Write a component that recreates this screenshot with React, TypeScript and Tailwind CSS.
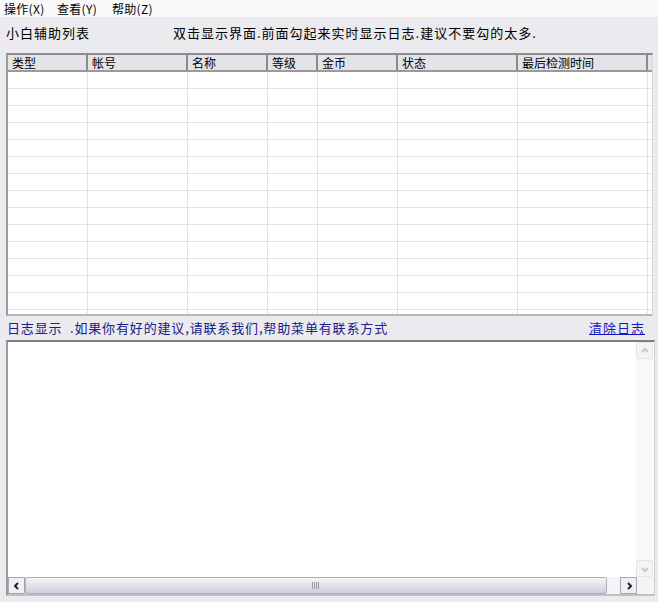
import React from "react";

const cols = [
  { name: "类型", w: 80 },
  { name: "帐号", w: 100 },
  { name: "名称", w: 80 },
  { name: "等级", w: 50 },
  { name: "金币", w: 80 },
  { name: "状态", w: 120 },
  { name: "最后检测时间", w: 130 },
];

const font = { fontFamily: '"Noto Sans CJK SC", "Noto Sans", sans-serif' };

function Chevron({ dir, color = "#222" }: { dir: "left" | "right" | "up" | "down"; color?: string }) {
  const d =
    dir === "left"
      ? "M6 2 L3 5 L6 8"
      : dir === "right"
      ? "M4 2 L7 5 L4 8"
      : dir === "up"
      ? "M2 6 L5 3 L8 6"
      : "M2 4 L5 7 L8 4";
  return (
    <svg width="10" height="10" viewBox="0 0 10 10">
      <path d={d} fill="none" stroke={color} strokeWidth="2" />
    </svg>
  );
}

export default function App() {
  const rows = Array.from({ length: 15 });
  return (
    <div className="w-[658px] h-[602px] bg-[#ebeaee] text-black overflow-hidden flex flex-col" style={font}>
      {/* menu */}
      <div className="h-[17px] bg-[#f9f9fa] flex items-center text-[12px] leading-none">
        <span className="ml-[4px] w-[53px] tracking-[0.3px]">操作(X)</span>
        <span className="w-[55px] tracking-[0.3px]">查看(Y)</span>
        <span className="tracking-[0.3px]">帮助(Z)</span>
      </div>
      {/* label row */}
      <div className="h-[36px] flex items-start pt-[8px] text-[13px] tracking-[1px] leading-[16px]">
        <span className="ml-[6px] w-[167px]">小白辅助列表</span>
        <span>双击显示界面.前面勾起来实时显示日志.建议不要勾的太多.</span>
      </div>
      {/* table */}
      <div className="ml-[6px] w-[647px] h-[263px] border-t-2 border-l-2 border-r border-b-2 border-t-[#8a8a8e] border-l-[#9a9a9e] border-r-[#d8d8dc] border-b-[#b8b8bc] bg-white overflow-hidden flex flex-col">
        <div className="flex h-[17px] bg-[#e4e4e8] border-b-2 border-b-[#9a9a9e] text-[12px] leading-[15px] shrink-0">
          {cols.map((c) => (
            <div
              key={c.name}
              className="border-r-2 border-r-[#8a8a8e] pl-[4px] shrink-0"
              style={{ width: c.w }}
            >
              {c.name}
            </div>
          ))}
          <div className="flex-1" />
        </div>
        <div className="flex flex-col">
          {rows.map((_, i) => (
            <div key={i} className="flex h-[17px] border-b border-b-[#e2e2e2] shrink-0">
              {cols.map((c) => (
                <div key={c.name} className="border-r border-r-[#e2e2e2] shrink-0" style={{ width: c.w }} />
              ))}
              <div className="flex-1" />
            </div>
          ))}
        </div>
      </div>
      {/* log label */}
      <div className="h-[24px] flex items-start pt-[4px] text-[13px] leading-[16px] tracking-[0.85px]">
        <span className="ml-[7px] text-[#18208a]">日志显示&nbsp;&nbsp;.如果你有好的建议,请联系我们,帮助菜单有联系方式</span>
        <span className="ml-auto mr-[13px] text-[#1414c8] underline tracking-[1px]">清除日志</span>
      </div>
      {/* log box */}
      <div className="ml-[6px] w-[649px] h-[256px] border-t-2 border-l-2 border-t-[#7e7e82] border-l-[#9a9a9e] border-r border-b-2 border-r-[#d0d0d4] border-b-[#c0c0c4] bg-white flex flex-col">
        <div className="flex flex-1 min-h-0">
          <div className="flex-1" />
          <div className="w-[17px] mr-[1px] bg-[#f8f8f8] flex flex-col justify-between">
            <div className="h-[17px] border border-[#e4e4e6] rounded-[2px] bg-[#f4f4f4] flex items-center justify-center">
              <Chevron dir="up" color="#c8c8cc" />
            </div>
            <div className="h-[17px] border border-[#e4e4e6] rounded-[2px] bg-[#f4f4f4] flex items-center justify-center">
              <Chevron dir="down" color="#c8c8cc" />
            </div>
          </div>
        </div>
        <div className="h-[17px] flex bg-[#f4f4f6] shrink-0">
          <div className="w-[17px] border border-[#a8a8b0] bg-[#f0f0f4] flex items-center justify-center">
            <Chevron dir="left" />
          </div>
          <div className="w-[582px] border border-[#b0b0bc] rounded-[2px] bg-gradient-to-b from-[#f4f4f8] to-[#d0d0dc] flex items-center justify-center">
            <svg width="8" height="7" viewBox="0 0 8 7">
              <path d="M0.5 0V7M2.5 0V7M4.5 0V7M6.5 0V7" stroke="#9a9aa6" strokeWidth="1" />
            </svg>
          </div>
          <div className="w-[13px]" />
          <div className="w-[17px] border border-[#a8a8b0] bg-[#f0f0f4] flex items-center justify-center">
            <Chevron dir="right" />
          </div>
          <div className="flex-1 bg-[#f4f4f6]" />
        </div>
      </div>
    </div>
  );
}
